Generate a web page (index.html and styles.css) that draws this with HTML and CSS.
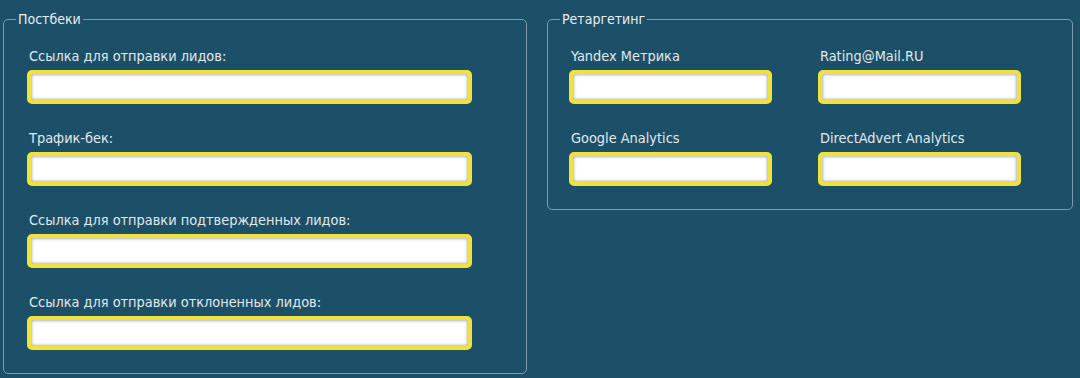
FILE: index.html
```html
<!DOCTYPE html>
<html lang="ru">
<head>
  <meta charset="UTF-8">
  <title>Постбеки и ретаргетинг</title>
  <link rel="stylesheet" href="styles.css">
</head>
<body>

  <div class="settings">
    <fieldset class="group group-postback">
      <legend>Постбеки</legend>
      <div class="fields">
        <div class="field">
          <label for="lead-url">Ссылка для отправки лидов:</label>
          <input type="text" id="lead-url" class="text-input">
        </div>
        <div class="field">
          <label for="traffic-back">Трафик-бек:</label>
          <input type="text" id="traffic-back" class="text-input">
        </div>
        <div class="field">
          <label for="confirmed-url">Ссылка для отправки подтвержденных лидов:</label>
          <input type="text" id="confirmed-url" class="text-input">
        </div>
        <div class="field">
          <label for="rejected-url">Ссылка для отправки отклоненных лидов:</label>
          <input type="text" id="rejected-url" class="text-input">
        </div>
      </div>
    </fieldset>

    <fieldset class="group group-retarget">
      <legend>Ретаргетинг</legend>
      <div class="fields fields-grid">
        <div class="field">
          <label for="yandex">Yandex Метрика</label>
          <input type="text" id="yandex" class="text-input">
        </div>
        <div class="field">
          <label for="mailru">Rating@Mail.RU</label>
          <input type="text" id="mailru" class="text-input">
        </div>
        <div class="field">
          <label for="google">Google Analytics</label>
          <input type="text" id="google" class="text-input">
        </div>
        <div class="field">
          <label for="directadvert">DirectAdvert Analytics</label>
          <input type="text" id="directadvert" class="text-input">
        </div>
      </div>
    </fieldset>
  </div>

</body>
</html>
```

FILE: styles.css
```css
body {
  font-family: 'DejaVu Sans Condensed', 'DejaVu Sans', sans-serif;
  font-size: 14.4px;
  background-color: #1c5068;
  color: #e1e9ed;
  margin: 0;
  padding: 0;
  overflow: hidden;
}

.settings {
  display: flex;
  align-items: flex-start;
  gap: 20px;
  padding: 11px 0 0 3px;
}

.group {
  box-sizing: border-box;
  margin: 0;
  padding: 20px 0 23px 12px;
  border: 1px solid #7f9aa8;
  border-radius: 5px;
}

.group legend {
  padding: 0 2px;
  line-height: 16px;
  font-size: 14px;
  color: #e8eef1;
}

.group-postback {
  width: 524px;
}

.group-retarget {
  width: 526px;
}

.fields {
  display: flex;
  flex-direction: column;
  gap: 25px;
  padding-left: 11px;
}

.fields-grid {
  display: grid;
  grid-template-columns: repeat(2, 203px);
  column-gap: 46px;
  row-gap: 25px;
  padding-left: 9px;
}

.field label {
  display: block;
  line-height: 18px;
  margin-bottom: 5px;
  padding-left: 2px;
}

.text-input {
  display: block;
  box-sizing: border-box;
  width: 445px;
  height: 34px;
  margin: 0;
  border: 4px solid #f0e23a;
  border-radius: 5px;
  background-color: #fff;
  box-shadow: inset 0 0 3px 1px rgba(0, 0, 0, 0.3);
  outline: none;
}

.fields-grid .text-input {
  width: 203px;
}
```
